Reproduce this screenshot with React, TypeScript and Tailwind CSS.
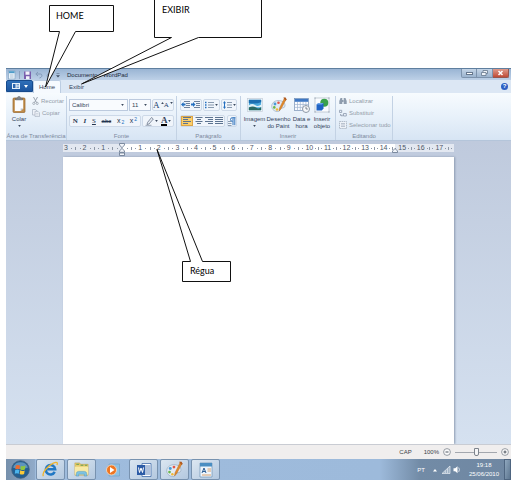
import type { ReactNode } from 'react'

const rulerMarks = [3, 2, 1, 0, 1, 2, 3, 4, 5, 6, 7, 8, 9, 10, 11, 12, 13, 14, 15, 16, 17]

function Caret({ className = '' }: { className?: string }) {
  return (
    <svg viewBox="0 0 4 3" className={`w-[3px] h-[2px] shrink-0 ${className}`} aria-hidden="true">
      <path d="M0 0h4L2 3z" fill="#3c4a5e" />
    </svg>
  )
}

function Group({ label, className = '', children }: { label: string; className?: string; children: ReactNode }) {
  return (
    <section aria-label={label} className={`flex flex-col shrink-0 border-r border-[#c3d2e4] ${className}`}>
      <div className="flex-1">{children}</div>
      <div className="h-2 text-center whitespace-nowrap text-[#7c899c]">{label}</div>
    </section>
  )
}

function Tools({ className = '', children }: { className?: string; children: ReactNode }) {
  return (
    <div className={`flex items-center justify-around h-3 rounded-xs border border-[#cdd9e8] bg-[#f0f5fb] ${className}`}>
      {children}
    </div>
  )
}

function Tool({ label, className = '', children }: { label: string; className?: string; children: ReactNode }) {
  return (
    <button type="button" aria-label={label} className={`flex items-center justify-center gap-px h-full ${className}`}>
      {children}
    </button>
  )
}

/* four text lines, pushed left, centre, right or justified */
function Lines({ d }: { d: string }) {
  return (
    <svg viewBox="0 0 8 8" className="size-2" aria-hidden="true">
      <path d={d} stroke="#5c7390" strokeWidth="1" fill="none" />
    </svg>
  )
}

function Indent({ flip = false }: { flip?: boolean }) {
  return (
    <svg viewBox="0 0 9 8" className="w-[9px] h-2" aria-hidden="true">
      <path d="M3 .5h6M5 2.5h4M5 4.5h4M3 6.5h6" stroke="#6d819b" fill="none" />
      <path d={flip ? 'M4.500 3.500 2 1v1.500H0v2h2V6z' : 'M0 3.500 2.500 1v1.500h2v2h-2V6z'} fill="#2470c0" />
    </svg>
  )
}

function ClipboardIcon() {
  return (
    <svg viewBox="0 0 14 17" className="w-[14px] h-[17px]" aria-hidden="true">
      <rect x="1" y="2" width="12" height="14.500" rx="1" fill="#c08c4a" stroke="#96662d" strokeWidth=".7" />
      <path d="M2.800 4h8.400v8.500l-2.500 2.500H2.800z" fill="#fbfcfe" />
      <path d="M11.200 12.500H8.700V15z" fill="#b9c4d4" />
      <path d="M3.500 4V2.200h2C5.500.800 6 .400 7 .400s1.500.400 1.500 1.800h2V4z" fill="#7f858d" stroke="#555b63" strokeWidth=".4" />
    </svg>
  )
}

function CutIcon() {
  return (
    <svg viewBox="0 0 7 8" className="w-[7px] h-2" aria-hidden="true">
      <path d="M1.500 0 4.500 5.500M5.500 0 2.500 5.500" stroke="#9aa3af" fill="none" />
      <circle cx="1.800" cy="6.400" r="1.100" fill="none" stroke="#9aa3af" strokeWidth=".8" />
      <circle cx="5.200" cy="6.400" r="1.100" fill="none" stroke="#9aa3af" strokeWidth=".8" />
    </svg>
  )
}

function CopyIcon() {
  return (
    <svg viewBox="0 0 8 8" className="size-2" aria-hidden="true">
      <path d="M.500.500h3L5 2v4H.500z" fill="#eef2f8" stroke="#a9b3c1" strokeWidth=".7" />
      <path d="M3 2.300h3L7.500 3.800v3.800H3z" fill="#eef2f8" stroke="#a9b3c1" strokeWidth=".7" />
      <path d="M4 4.500h2.500M4 6h2.500" stroke="#b7c0cc" strokeWidth=".5" />
    </svg>
  )
}

function PictureIcon() {
  return (
    <svg viewBox="0 0 16 16" className="size-4" aria-hidden="true">
      <rect x=".500" y="1.500" width="15" height="13" fill="#fff" stroke="#c1cbd6" strokeWidth=".7" />
      <rect x="1.800" y="2.800" width="12.400" height="10.400" fill="#4aa8dc" />
      <path d="M1.800 2.800h12.400v2.400Q8 7.500 1.800 6z" fill="#1d6fb0" />
      <path d="M1.800 8.500Q5 6 8 8t6.200-.500v2.800H1.800z" fill="#dff1f7" />
      <path d="M1.800 10.500Q6 8.500 9 10.500t5.200-.500v3.200H1.800z" fill="#2a6a63" />
    </svg>
  )
}

function PaletteIcon({ className = 'size-4' }: { className?: string }) {
  return (
    <svg viewBox="0 0 16 16" className={className} aria-hidden="true">
      <path d="M7 3.500C3 3.700.500 6.500.700 9.500c.200 3.200 3.300 5.500 6.800 5 1.800-.300 1-2 2-3 1.200-1 4 .200 4.500-2.500.500-3.500-3-5.700-7-5.500z" fill="#e3eaf2" stroke="#8fa3b9" strokeWidth=".6" />
      <circle cx="4" cy="7" r="1.400" fill="#4b9bd8" />
      <circle cx="7.500" cy="5.700" r="1.300" fill="#e2574a" />
      <circle cx="3.300" cy="10.400" r="1.300" fill="#69b64c" />
      <circle cx="6" cy="12.500" r="1.200" fill="#f1b835" />
      <path d="m13.500 1 1.700 1.200L10 12l-2 2 .500-3z" fill="#e08a2c" stroke="#b4641a" strokeWidth=".4" />
      <path d="M12.300.600h2.400l1 2.200-1.200 1z" fill="#b05a20" />
    </svg>
  )
}

function DateIcon() {
  return (
    <svg viewBox="0 0 16 16" className="size-4" aria-hidden="true">
      <rect x=".500" y="1.500" width="14" height="12" fill="#fbfcff" stroke="#7690b4" strokeWidth=".7" />
      <rect x=".800" y="1.800" width="13.400" height="3" fill="#3f78c4" />
      <path d="M3.500 5v8.500M6.300 5v8.500M9.100 5v8.500M11.900 5v8.500M1 7.500h13M1 10.400h13" stroke="#9fb4d0" strokeWidth=".7" />
      <circle cx="12" cy="12" r="3.500" fill="#f6f7f9" stroke="#8d98a6" />
      <path d="M12 9.800V12h1.800" stroke="#4d5a6a" strokeWidth=".7" fill="none" />
    </svg>
  )
}

function ObjectIcon() {
  return (
    <svg viewBox="0 0 16 16" className="size-4" aria-hidden="true">
      <rect x="1" y="1" width="14" height="14" fill="#fafcff" stroke="#a3aebb" strokeWidth=".6" />
      <path d="M.500.500h1v1h-1zM14.500.500h1v1h-1zM.500 14.500h1v1h-1zM14.500 14.500h1v1h-1z" fill="#8b97a6" />
      <circle cx="10.300" cy="5.700" r="4" fill="#39a14c" />
      <path d="m2.500 7.500 2-1.500h5v5.500L7.800 13.500H2.500z" fill="#1f63c4" />
      <path d="m2.500 7.500 2-1.500h5l-1.700 1.500z" fill="#6ba5ea" />
    </svg>
  )
}

function InsertButton({ lines, icon, className, menu }: { lines: string[]; icon: ReactNode; className: string; menu?: boolean }) {
  return (
    <button type="button" className={`flex flex-col items-center leading-[7px] whitespace-nowrap ${className}`}>
      {icon}
      {lines.map((line, i) => (
        <span key={line} className={i === 0 ? 'mt-[3px]' : ''}>{line}</span>
      ))}
      {menu && <Caret className="mt-0.5" />}
    </button>
  )
}

function TitleBar() {
  return (
    <header className="flex items-center h-3 pl-0.5 border-t border-[#5f7f9f] bg-linear-to-b from-[#9ab5d4] to-[#bdd0e7]">
      <svg viewBox="0 0 54 10" className="w-[54px] h-2.5 shrink-0" aria-hidden="true">
        <rect x=".500" y="1" width="6.500" height="8" fill="#e9f3fb" stroke="#7c9dbb" strokeWidth=".6" />
        <path d="M1 1.200h5.600v2H1z" fill="#4d9bc9" />
        <path d="M2 5h3.500M2 7h3.500" stroke="#8ea6bd" strokeWidth=".6" />
        <path d="M11.500 1v8" stroke="#7e94b0" strokeWidth=".7" />
        <rect x="16" y="1.500" width="7" height="7.500" fill="#7a5fae" />
        <path d="M17.500 1.500h4v3.200h-4zM18 6.200h3.500V9H18z" fill="#f3f3fb" />
        <path d="M28 4h4.500c2 0 2 3.500-1 4M30 2l-2.200 2L30 6" fill="none" stroke="#8299b8" />
        <path d="M45 4h-4.500c-2 0-2 3.500 1 4M43 2l2.200 2L43 6" fill="none" stroke="#8299b8" />
        <path d="M48.500 3.500h3M48.500 5.500h3L50 7.200z" fill="#3c4a5e" stroke="#3c4a5e" strokeWidth=".4" />
      </svg>
      <h1 className="ml-[5px] flex-1 text-[#1c2a3c]">Documento - WordPad</h1>
      <div className="flex self-start mr-0.5">
        <button type="button" aria-label="Minimizar" className="flex w-4 h-[9px] items-center justify-center rounded-bl-xs border border-t-0 border-[#7d93ad] bg-linear-to-b from-[#c4d4e6] to-[#9cb4cf]">
          <span className="w-[7px] h-[3px] border border-[#66778d] bg-white" />
        </button>
        <button type="button" aria-label="Restaurar" className="flex w-4 h-[9px] items-center justify-center border border-t-0 border-l-0 border-[#7d93ad] bg-linear-to-b from-[#c4d4e6] to-[#9cb4cf]">
          <svg viewBox="0 0 7 6" className="w-[7px] h-1.5" aria-hidden="true">
            <path d="M2 2V.500h4.500v3H5M.500 2.500H5v3H.500z" fill="#eef3f8" stroke="#66778d" strokeWidth=".8" />
          </svg>
        </button>
        <button type="button" aria-label="Fechar" className="flex w-4 h-[9px] items-center justify-center rounded-br-xs border border-t-0 border-l-0 border-[#94564e] bg-linear-to-b from-[#dd9a8c] to-[#bf4a36]">
          <svg viewBox="0 0 7 6" className="w-[7px] h-1.5" aria-hidden="true">
            <path d="m1.500 1 4 4M5.500 1l-4 4" stroke="#fff" strokeWidth="1.500" />
          </svg>
        </button>
      </div>
    </header>
  )
}

function TabRow() {
  return (
    <nav className="flex h-[13px] bg-[#dce7f4] text-[#33435a]">
      <button type="button" aria-label="Menu do WordPad" className="flex w-[27px] h-3 items-center justify-center gap-1 rounded-t-xs border border-[#164a8c] bg-linear-to-b from-[#2f6fb8] to-[#1c559f]">
        <svg viewBox="0 0 8 6" className="w-2 h-1.5" aria-hidden="true">
          <path d="M0 0h8v6H0z" fill="#e7f0fa" />
          <path d="M1 1h2.500v4H1z" fill="#2b64ad" />
          <path d="M4.500 1.500H7M4.500 3H7M4.500 4.500H7" stroke="#2b64ad" strokeWidth=".6" />
        </svg>
        <svg viewBox="0 0 4 3" className="w-1 h-[3px]" aria-hidden="true">
          <path d="M0 0h4L2 3z" fill="#fff" />
        </svg>
      </button>
      <button type="button" className="w-7 rounded-t-xs border border-b-0 border-[#bccde2] bg-[#f6fafe]">Home</button>
      <button type="button" className="w-[31px]">Exibir</button>
      <button type="button" aria-label="Ajuda" className="ml-auto mr-[3px] size-[7px] self-center rounded-full bg-[#2c5fc4] leading-[7px] font-bold text-white">?</button>
    </nav>
  )
}

function Ribbon() {
  return (
    <div className="flex h-12 pt-[3px] border-b border-[#b4c5da] bg-linear-to-b from-[#f7fbfe] via-[#e8f1fa] to-[#d7e5f4] text-[#34435a]">
      <Group label="Área de Transferência" className="w-[61px]">
        <div className="flex">
          <button type="button" className="flex flex-col items-center w-[26px] leading-[7px]">
            <ClipboardIcon />
            <span className="mt-[3px]">Colar</span>
            <Caret className="mt-0.5" />
          </button>
          <div className="flex flex-col items-start gap-1 pt-px text-[#929daa] leading-2">
            <button type="button" className="flex items-center gap-0.5"><CutIcon />Recortar</button>
            <button type="button" className="flex items-center gap-0.5"><CopyIcon />Copiar</button>
          </div>
        </div>
      </Group>

      <Group label="Fonte" className="w-[110px]">
        <div className="flex flex-col gap-1 px-0.5 pt-[3px]">
          <div className="flex gap-px">
            <div className="relative">
              <select aria-label="Fonte" className="block w-[59px] h-3 appearance-none border border-[#bccade] bg-[#f9fbfe] pl-0.5">
                <option>Calibri</option>
              </select>
              <Caret className="absolute right-1 top-[5px] pointer-events-none" />
            </div>
            <div className="relative">
              <select aria-label="Tamanho da fonte" className="block w-[22px] h-3 appearance-none border border-[#bccade] bg-[#f9fbfe] pl-0.5">
                <option>11</option>
              </select>
              <Caret className="absolute right-1 top-[5px] pointer-events-none" />
            </div>
            <Tools className="w-[23px] font-['Liberation_Serif',serif] text-[#20406c]">
              <Tool label="Aumentar fonte" className="text-[9px]">A<Caret className="rotate-180 self-start mt-0.5" /></Tool>
              <Tool label="Reduzir fonte" className="text-[7px]">A<Caret className="self-start mt-0.5" /></Tool>
            </Tools>
          </div>
          <div className="flex gap-px">
            <Tools className="w-[72px] text-[7px] text-[#23344e]">
              <Tool label="Negrito" className="font-['Liberation_Serif',serif] font-bold">N</Tool>
              <Tool label="Itálico" className="font-['Liberation_Serif',serif] font-bold italic">I</Tool>
              <Tool label="Sublinhado" className="font-['Liberation_Serif',serif] underline">S</Tool>
              <Tool label="Tachado" className="line-through text-[6px]">abc</Tool>
              <Tool label="Subscrito">x<sub className="text-[5px] text-[#2470c0]">2</sub></Tool>
              <Tool label="Sobrescrito">x<sup className="text-[5px] text-[#2470c0]">2</sup></Tool>
            </Tools>
            <Tools className="w-8">
              <Tool label="Cor de realce do texto">
                <svg viewBox="0 0 9 9" className="size-[9px]" aria-hidden="true">
                  <path d="M6.500.500 8.300 2 4 7 2 7.500l.500-2z" fill="#e6ebf2" stroke="#5e6d82" strokeWidth=".7" />
                  <path d="M.500 8.300h6" stroke="#9aa6b6" />
                </svg>
                <Caret />
              </Tool>
              <Tool label="Cor do texto">
                <span className="font-['Liberation_Serif',serif] font-bold text-[9px] leading-[8px] border-b-2 border-black">A</span>
                <Caret />
              </Tool>
            </Tools>
          </div>
        </div>
      </Group>

      <Group label="Parágrafo" className="w-16">
        <div className="flex flex-col gap-1 px-[3px] pt-[3px]">
          <div className="flex gap-px">
            <Tools className="w-[22px]">
              <Tool label="Diminuir recuo"><Indent /></Tool>
              <Tool label="Aumentar recuo"><Indent flip /></Tool>
            </Tools>
            <Tools className="w-[18px]">
              <Tool label="Iniciar uma lista">
                <svg viewBox="0 0 9 8" className="w-[9px] h-2" aria-hidden="true">
                  <path d="M3 1.500h6M3 4h6M3 6.500h6" stroke="#6d819b" strokeWidth=".8" />
                  <path d="M0 .800h1.500v1.500H0zM0 3.300h1.500v1.500H0zM0 5.800h1.500v1.500H0z" fill="#2470c0" />
                </svg>
                <Caret />
              </Tool>
            </Tools>
            <Tools className="w-4">
              <Tool label="Espaçamento entre linhas">
                <svg viewBox="0 0 9 8" className="w-[9px] h-2" aria-hidden="true">
                  <path d="M4 1.500h5M4 4h5M4 6.500h5" stroke="#6d819b" strokeWidth=".8" />
                  <path d="M1.500 0 3 2.200H2v3.600h1L1.500 8 0 5.800h1V2.200H0z" fill="#2470c0" />
                </svg>
                <Caret />
              </Tool>
            </Tools>
          </div>
          <div className="flex gap-0.5">
            <Tools className="w-[47px]">
              <Tool label="Alinhar à esquerda" className="-ml-px w-3 border border-[#dca548] bg-[#fccf6a]"><Lines d="M0 .500h8M0 2.500h5M0 4.500h8M0 6.500h5" /></Tool>
              <Tool label="Centralizar"><Lines d="M.500.500h7M2 2.500h4M.500 4.500h7M2 6.500h4" /></Tool>
              <Tool label="Alinhar à direita"><Lines d="M0 .500h8M3 2.500h5M0 4.500h8M3 6.500h5" /></Tool>
              <Tool label="Justificar"><Lines d="M0 .500h8M0 2.500h8M0 4.500h8M0 6.500h8" /></Tool>
            </Tools>
            <Tools className="w-2.5">
              <Tool label="Parágrafo">
                <svg viewBox="0 0 8 9" className="w-2 h-[9px]" aria-hidden="true">
                  <path d="M0 4.500h3.500M0 6.500h3.500M0 8.500h3.500" stroke="#7186a0" strokeWidth=".8" />
                  <path d="M7.500.700H4.300a1.800 1.800 0 0 0 0 3.600h.500M5 .700v7.500M6.800.700v7.500" fill="none" stroke="#3577be" />
                </svg>
              </Tool>
            </Tools>
          </div>
        </div>
      </Group>

      <Group label="Inserir" className="w-[95px]">
        <div className="flex pl-0.5 pt-px">
          <InsertButton lines={['Imagem']} icon={<PictureIcon />} className="w-[23px]" menu />
          <InsertButton lines={['Desenho', 'do Paint']} icon={<PaletteIcon />} className="w-[25px]" />
          <InsertButton lines={['Data e', 'hora']} icon={<DateIcon />} className="w-[21px]" />
          <InsertButton lines={['Inserir', 'objeto']} icon={<ObjectIcon />} className="w-5" />
        </div>
      </Group>

      <Group label="Editando" className="w-[57px]">
        <div className="flex flex-col items-start gap-1 pt-px pl-[3px] text-[#929daa] leading-2 whitespace-nowrap">
          <button type="button" className="flex items-center gap-0.5">
            <svg viewBox="0 0 8 8" className="size-2" aria-hidden="true">
              <path d="M1.500 1h1.800v6H.300V4zM6.500 1H4.700v6h3V4zM3 3h2v2H3z" fill="#8f9dae" />
            </svg>
            Localizar
          </button>
          <button type="button" className="flex items-center gap-0.5">
            <svg viewBox="0 0 8 8" className="size-2" aria-hidden="true">
              <path d="M.500 3.500V1.300h2.200v2.200zM4.500 7V4.500h2.800V7zM1.500 5v1.500h2M3 5.500l1 1-1 1" fill="none" stroke="#97a4b5" strokeWidth=".9" />
            </svg>
            Substituir
          </button>
          <button type="button" className="flex items-center gap-0.5">
            <svg viewBox="0 0 8 8" className="size-2" aria-hidden="true">
              <rect x=".500" y=".500" width="7" height="7" fill="#eef2f8" stroke="#a5b0be" strokeWidth=".8" strokeDasharray="1.500 .600" />
              <path d="M2 2.500h4M2 4h4M2 5.500h4" stroke="#a5b0be" strokeWidth=".7" />
            </svg>
            Selecionar tudo
          </button>
        </div>
      </Group>
    </div>
  )
}

function Ruler() {
  return (
    <div className="relative mx-[57px] mt-[3px] h-2 bg-[linear-gradient(90deg,#e3e8f1_15%,#fff_15%,#fff_85%,#e3e8f1_85%)] text-[7px] text-[#4c5666]">
      <div className="grid grid-cols-21 h-2 pl-px">
        {rulerMarks.map((mark, i) => (
          <div key={i} className="flex items-center justify-between pr-0.5 leading-2">
            <span className={mark === 0 ? 'invisible' : ''}>{mark}</span>
            <span className="size-px bg-[#8d97a6]" />
            <span className="w-px h-[3px] bg-[#8d97a6]" />
            <span className="size-px bg-[#8d97a6]" />
          </div>
        ))}
      </div>
      <svg viewBox="0 0 6 13" className="absolute left-[15%] -ml-[3px] -top-px w-1.5 h-[13px]" aria-label="Recuo à esquerda">
        <path d="M.500.500h5v1.500L3 4.800.500 2zM3 5.300 5.500 8v1.300h-5V8zM.500 10h5v2.500h-5z" fill="#f2f5fa" stroke="#63738b" strokeWidth=".8" />
      </svg>
      <svg viewBox="0 0 6 5" className="absolute left-[85%] -ml-[3px] top-1 w-1.5 h-[5px]" aria-label="Recuo à direita">
        <path d="M3 .500 5.500 3v1.500h-5V3z" fill="#f2f5fa" stroke="#63738b" strokeWidth=".8" />
      </svg>
    </div>
  )
}

function StatusBar() {
  return (
    <footer className="flex items-center h-[15px] pr-0.5 border-t border-[#c9ccd3] bg-[#f0eeee] text-[#3a3f48]">
      <span className="ml-auto mr-3">CAP</span>
      <span className="mr-1">100%</span>
      <ZoomButton label="Menos zoom" d="M2.500 4h3" />
      <input
        type="range"
        aria-label="Zoom"
        defaultValue={50}
        className="w-[42px] h-2 mx-1 appearance-none bg-[linear-gradient(#a3a7ae,#a3a7ae)] bg-[length:100%_1px] bg-center bg-no-repeat [&::-webkit-slider-thumb]:appearance-none [&::-webkit-slider-thumb]:w-[5px] [&::-webkit-slider-thumb]:h-2 [&::-webkit-slider-thumb]:rounded-b-xs [&::-webkit-slider-thumb]:border [&::-webkit-slider-thumb]:border-[#7d838c] [&::-webkit-slider-thumb]:bg-[#f6f6f7]"
      />
      <ZoomButton label="Mais zoom" d="M2.500 4h3M4 2.500v3" />
    </footer>
  )
}

function ZoomButton({ label, d }: { label: string; d: string }) {
  return (
    <button type="button" aria-label={label}>
      <svg viewBox="0 0 8 8" className="size-2" aria-hidden="true">
        <circle cx="4" cy="4" r="3.400" fill="#fafafa" stroke="#7f858e" strokeWidth=".8" />
        <path d={d} stroke="#4f5661" />
      </svg>
    </button>
  )
}

function TaskButton({ label, active = true, children }: { label: string; active?: boolean; children: ReactNode }) {
  return (
    <button
      type="button"
      aria-label={label}
      className={`flex w-[29px] h-[21px] items-center justify-center rounded-xs border ${active ? 'border-[#7892af] bg-linear-to-br from-[#dbe6f1] to-[#b3c8df]' : 'border-transparent'}`}
    >
      {children}
    </button>
  )
}

function Taskbar() {
  return (
    <div className="flex h-[21px] bg-[linear-gradient(90deg,#9fbcdd_0%,#9dbadb_74%,#728ba6_82%,#6f87a2_100%)]">
      <button type="button" aria-label="Iniciar" className="flex w-[29px] items-center justify-center bg-linear-to-r from-[#7690ac] to-[#91abc9]">
        <svg viewBox="0 0 19 19" className="size-[19px]" aria-hidden="true">
          <circle cx="9.500" cy="9.500" r="8.800" fill="#245f91" stroke="#42617f" strokeWidth=".8" />
          <path d="M2 7.500a8 8 0 0 1 15 0Q9.500 11 2 7.500z" fill="#78abd0" opacity=".7" />
          <path d="M4.800 5.500q2.200-1.200 4.200 0l-.500 3.700q-2-1-4.200 0z" fill="#ef6a2d" />
          <path d="M9.800 5.900q2.200 1 4.700-.300l-.600 3.800q-2.200 1.200-4.500.100z" fill="#8fc63f" />
          <path d="M4.200 10q2.200-1 4.200 0l-.600 3.700q-2-1-4 0z" fill="#4cb4ec" />
          <path d="M9.200 10.300q2.200 1.200 4.500.100l-.600 3.600q-2.200 1.200-4.400 0z" fill="#fcca37" />
        </svg>
      </button>
      <div className="flex flex-1 gap-0.5 pl-px">
        <TaskButton label="Internet Explorer">
          <svg viewBox="0 0 18 18" className="size-[17px]" aria-hidden="true">
            <path d="M13.500 11.500A5 5 0 1 1 14 8.800H5.500" fill="none" stroke="#2178c4" strokeWidth="2.600" />
            <path d="M1.500 16C-.500 13 6 5 12 2.200c3.500-1.600 5-.700 3.800 2" fill="none" stroke="#eeb42f" strokeWidth="1.400" />
          </svg>
        </TaskButton>
        <TaskButton label="Windows Explorer">
          <svg viewBox="0 0 18 18" className="size-[17px]" aria-hidden="true">
            <path d="M2 2h5l1 1.500h8V15H2z" fill="#e9cc6d" stroke="#b89b45" strokeWidth=".5" />
            <path d="M3.500 3.500h3M8 4.500h3M12.500 4.500h2.500" stroke="#5d9c53" />
            <path d="M2 6h14v8.500H2z" fill="#f8eaa6" />
            <path d="M3.500 16v-2.500q0-2.500 2.500-2.500h6q2.500 0 2.500 2.500V16h-2.500v-2h-6v2z" fill="#7cc3e4" stroke="#4a94bd" strokeWidth=".5" />
          </svg>
        </TaskButton>
        <TaskButton label="Windows Media Player" active={false}>
          <svg viewBox="0 0 16 16" className="size-4" aria-hidden="true">
            <path d="M4 2h10.500v12H4z" fill="#8dc1e4" stroke="#6d9fc4" strokeWidth=".6" />
            <circle cx="6.500" cy="8" r="5" fill="#ee7622" stroke="#f9dcc2" strokeWidth=".8" />
            <path d="m5 5 4.500 3L5 11z" fill="#fff" />
          </svg>
        </TaskButton>
        <TaskButton label="Microsoft Word">
          <svg viewBox="0 0 16 16" className="size-4" aria-hidden="true">
            <path d="M6 1.500h9v13H6z" fill="#f8fafd" stroke="#426ca9" strokeWidth=".8" />
            <path d="M8 4h6M8 6h6M8 8h6M8 10h6M8 12h6" stroke="#426ca9" strokeWidth=".8" />
            <path d="M1 3h8v10H1z" fill="#2c5ba6" />
            <path d="m2.500 5.500 1 5L5 6l1.500 4.500 1-5" fill="none" stroke="#fff" />
          </svg>
        </TaskButton>
        <TaskButton label="Paint"><PaletteIcon className="size-[17px]" /></TaskButton>
        <TaskButton label="WordPad">
          <svg viewBox="0 0 14 16" className="w-3.5 h-4" aria-hidden="true">
            <path d="M1 1h12v14H1z" fill="#eef5fb" stroke="#6f94b5" strokeWidth=".7" />
            <path d="M1 1h12v3.500H1z" fill="#4a8ec2" />
            <path d="m3 11 2-5 2 5M3.700 9.500h2.600" fill="none" stroke="#2d5f96" />
            <path d="M8.500 7H12M8.500 9H12M3 13h9" stroke="#d28b4c" strokeWidth=".8" />
          </svg>
        </TaskButton>
      </div>
      <div className="flex items-center text-white">
        <span className="mr-2">PT</span>
        <svg viewBox="0 0 28 9" className="w-7 h-[9px]" aria-hidden="true">
          <path d="M0 6.500h4L2 4z" fill="#fff" />
          <path d="M9 8.500 17 1v7.500z" fill="#9db0c4" stroke="#e8eef4" strokeWidth=".7" />
          <path d="M12.300 8V5.500M14.600 8V3.500" stroke="#e8eef4" strokeWidth=".7" />
          <path d="M20.500 3.200h1.700l2.300-2v7l-2.300-2h-1.700z" fill="#fff" />
          <path d="M25.700 2.500q1.500 2.200 0 4.400" fill="none" stroke="#fff" strokeWidth=".7" />
        </svg>
        <time className="ml-2 mr-[5px] text-center leading-[9px]">19:18<br />25/06/2010</time>
        <button type="button" aria-label="Mostrar área de trabalho" className="w-[7px] h-[21px] border border-[#4e6580] bg-linear-to-br from-[#90a8bf] to-[#5d7690]" />
      </div>
    </div>
  )
}

function Callout({ text, className, textClassName, viewBox, d }: { text: string; className: string; textClassName: string; viewBox: string; d: string }) {
  return (
    <div className={`absolute pointer-events-none text-[9px] leading-3 text-black font-[Lato,sans-serif] ${className}`}>
      <svg viewBox={viewBox} className="absolute inset-0 size-full" aria-hidden="true">
        <path d={d} fill="#fff" stroke="#111" />
      </svg>
      <p className={`relative ${textClassName}`}>{text}</p>
    </div>
  )
}

export default function App() {
  return (
    <main className="relative flex flex-col min-h-screen overflow-hidden bg-white pt-17 pl-1.5 pr-2 pb-2 text-[6px] leading-2 font-['Liberation_Sans',sans-serif]">
      <TitleBar />
      <TabRow />
      <Ribbon />
      <div className="flex flex-col flex-1 bg-linear-to-b from-[#bfcadd] to-[#d5e1f0]">
        <Ruler />
        <textarea
          aria-label="Documento"
          className="block flex-1 mx-[57px] mt-[5px] resize-none bg-white p-10 text-xs shadow-[1px_0_2px_#8d9bb0] outline-none"
        />
      </div>
      <StatusBar />
      <Taskbar />

      <Callout
        text="HOME"
        className="left-11 top-1 w-[70px] h-[84px]"
        textClassName="pl-3 pt-1.5"
        viewBox="0 0 70 84"
        d="M5.500 1.500h64v26h-38L1.500 83l14-55.500h-10z"
      />
      <Callout
        text="EXIBIR"
        className="left-20 top-0 w-[182px] h-[86px]"
        textClassName="pl-[82px] pt-1"
        viewBox="0 0 182 86"
        d="M74.500-2h107v39.500h-63L1.500 84l90-46.500h-17z"
      />
      <Callout
        text="Régua"
        className="left-[156px] top-37 w-[75px] h-[134px]"
        textClassName="pl-[34px] pt-[117px]"
        viewBox="0 0 75 134"
        d="M26.500 113.500h8L1 1.500l45.500 112h28v20h-48z"
      />
    </main>
  )
}
